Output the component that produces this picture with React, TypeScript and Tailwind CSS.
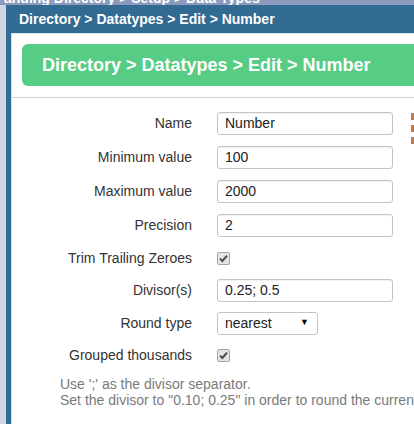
const font = { fontFamily: '"Liberation Sans", Arial, sans-serif' };

function Check() {
  return (
    <span className="flex h-[13px] w-[13px] items-center justify-center rounded-[2px] border border-[#a6a6a6] bg-[#e4e4e4]">
      <svg width="9" height="9" viewBox="0 0 9 9">
        <path d="M1 4.6 L3.4 7 L8 1.6" fill="none" stroke="#4a4a4a" strokeWidth="2" />
      </svg>
    </span>
  );
}

function TextBox({ value }: { value: string }) {
  return (
    <div className="flex h-[23px] w-[176px] items-center rounded-[3px] border border-[#c4c4c4] px-[7px] text-[14px] text-[#222] shadow-[inset_0_1px_1px_rgba(0,0,0,0.06)]">
      {value}
    </div>
  );
}

type Row = { label: string; h: string; field: React.ReactNode };

const rows: Row[] = [
  { label: "Name", h: "h-[33px]", field: <TextBox value="Number" /> },
  { label: "Minimum value", h: "h-[34px]", field: <TextBox value="100" /> },
  { label: "Maximum value", h: "h-[34px]", field: <TextBox value="2000" /> },
  { label: "Precision", h: "h-[34px]", field: <TextBox value="2" /> },
  { label: "Trim Trailing Zeroes", h: "h-[32px]", field: <Check /> },
  { label: "Divisor(s)", h: "h-[32px]", field: <TextBox value="0.25; 0.5" /> },
  {
    label: "Round type",
    h: "h-[34px]",
    field: (
      <div className="flex h-[23px] w-[101px] items-center justify-between rounded-[3px] border border-[#c4c4c4] pl-[7px] pr-[8px] text-[14px] text-[#222]">
        <span>nearest</span>
        <span className="text-[9px] text-black">▼</span>
      </div>
    ),
  },
  { label: "Grouped thousands", h: "h-[30px]", field: <Check /> },
];

export default function App() {
  return (
    <div className="relative h-[424px] w-[414px] overflow-hidden bg-[#cfd6e2]" style={font}>
      <div className="h-[5px] overflow-hidden bg-[#8c9bbd] pl-[4px]">
        <div className="-mt-[10px] whitespace-nowrap text-[14px] font-bold leading-[16px] text-white">
          anding Directory &gt; Setup &gt; Data Types
        </div>
      </div>
      <div className="ml-[6px] flex h-[419px] w-[470px] flex-col bg-[#316b91] pl-[5px]">
        <div className="flex h-[28px] shrink-0 items-center pl-[8px] pt-[1px] text-[14px] font-bold text-white">
          Directory &gt; Datatypes &gt; Edit &gt; Number
        </div>
        <div className="flex-1 border-l border-t border-[#d9e1ea] bg-white">
          <div className="pl-[10px] pt-[10px]">
            <div className="flex h-[42px] items-center rounded-l-[6px] bg-[#57cc85] pl-[20px] text-[18px] font-bold text-white">
              Directory &gt; Datatypes &gt; Edit &gt; Number
            </div>
          </div>
          <div className="mt-[11px] h-px bg-[#cfcfcf]" />
          <div className="relative pt-[9px]">
            {rows.map((r) => (
              <div key={r.label} className={`flex items-center ${r.h}`}>
                <div className="w-[180px] text-right text-[14px] text-[#333]">{r.label}</div>
                <div className="pl-[25px]">{r.field}</div>
              </div>
            ))}
            <div className="absolute left-[399px] top-[15px] flex flex-col gap-[5px]">
              <span className="h-[7px] w-[4px] bg-[#c27c4c]" />
              <span className="h-[7px] w-[4px] bg-[#c27c4c]" />
              <span className="h-[7px] w-[4px] bg-[#c27c4c]" />
            </div>
          </div>
          <div className="mt-[6px] whitespace-nowrap pl-[48px] text-[14px] leading-[16px] text-[#7a7a7a]">
            <div>Use ';' as the divisor separator.</div>
            <div>Set the divisor to "0.10; 0.25" in order to round the current value.</div>
          </div>
        </div>
      </div>
    </div>
  );
}
